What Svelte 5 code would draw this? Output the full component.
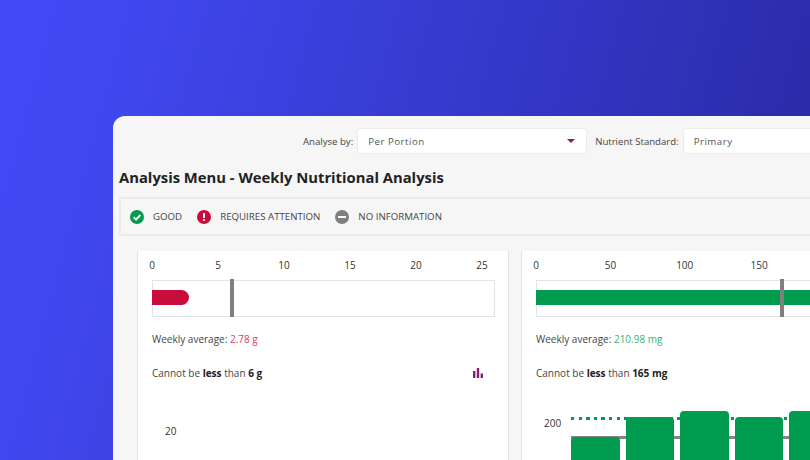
<script>
  const legend = [
    { kind: 'good', label: 'GOOD' },
    { kind: 'bad', label: 'REQUIRES ATTENTION' },
    { kind: 'none', label: 'NO INFORMATION' }
  ];

  const leftTicks = [0, 5, 10, 15, 20, 25];
  const rightTicks = [0, 50, 100, 150];
  const bars = [23, 43, 49, 43, 49];
</script>

<div class="page">
  <div class="panel">
    <div class="toolbar">
      <span class="field-label">Analyse by:</span>
      <div class="select first">
        <span>Per Portion</span>
        <span class="caret"></span>
      </div>
      <span class="field-label">Nutrient Standard:</span>
      <div class="select second">
        <span>Primary</span>
      </div>
    </div>

    <h1>Analysis Menu - Weekly Nutritional Analysis</h1>

    <div class="legend">
      {#each legend as item}
        <div class="legend-item">
          <svg width="14" height="14" viewBox="0 0 14 14">
            {#if item.kind === 'good'}
              <circle cx="7" cy="7" r="7" fill="#019b4f" />
              <path d="M3.6 7.2l2.4 2.4 4.4-4.6" fill="none" stroke="#fff" stroke-width="1.9" />
            {:else if item.kind === 'bad'}
              <circle cx="7" cy="7" r="7" fill="#c80d3c" />
              <rect x="6" y="3" width="2" height="5" rx="0.6" fill="#fff" />
              <rect x="6" y="9" width="2" height="2" rx="0.8" fill="#fff" />
            {:else}
              <circle cx="7" cy="7" r="7" fill="#7f7f7f" />
              <rect x="3" y="6" width="8" height="2" fill="#fff" />
            {/if}
          </svg>
          <span>{item.label}</span>
        </div>
      {/each}
    </div>

    <div class="cards">
      <section class="card left">
        <div class="ticks">
          {#each leftTicks as tick}
            <span>{tick}</span>
          {/each}
        </div>
        <div class="track">
          <div class="fill red"></div>
          <div class="marker marker-left"></div>
        </div>
        <p class="average">Weekly average: <span class="low">2.78 g</span></p>
        <div class="rule-row">
          <p>Cannot be <b>less</b> than <b>6 g</b></p>
          <svg width="10" height="10" viewBox="0 0 10 10">
            <rect x="0" y="3" width="2.4" height="7" fill="#8d1b6b" />
            <rect x="3.8" y="0" width="2.4" height="10" fill="#8d1b6b" />
            <rect x="7.6" y="5.5" width="2.4" height="4.5" fill="#8d1b6b" />
          </svg>
        </div>
        <div class="axis-label left-axis">20</div>
      </section>

      <section class="card right">
        <div class="ticks wide">
          {#each rightTicks as tick}
            <span>{tick}</span>
          {/each}
        </div>
        <div class="track">
          <div class="fill green"></div>
          <div class="marker marker-right"></div>
        </div>
        <p class="average">Weekly average: <span class="high">210.98 mg</span></p>
        <div class="rule-row">
          <p>Cannot be <b>less</b> than <b>165 mg</b></p>
        </div>
        <div class="bar-chart">
          <div class="axis-label">200</div>
          <div class="plot">
            <div class="dotted"></div>
            <div class="solid"></div>
            {#each bars as height}
              <div class="bar" style="height: {height}px"></div>
            {/each}
          </div>
        </div>
      </section>
    </div>
  </div>
</div>

<style>
  :global(body) {
    margin: 0;
  }

  .page {
    width: 810px;
    height: 460px;
    overflow: hidden;
    box-sizing: border-box;
    padding: 116px 0 0 113px;
    background: linear-gradient(105deg, #424af7 0%, #4047ee 15%, #2828a0 100%);
    font-family: "Open Sans", sans-serif;
    color: #333;
  }

  .panel {
    width: 900px;
    height: 344px;
    overflow: hidden;
    box-sizing: border-box;
    padding: 12px 0 0 6px;
    background: #f6f6f6;
    border-radius: 12px 0 0 0;
  }

  .toolbar {
    display: flex;
    align-items: center;
    height: 26px;
    padding-left: 184px;
  }

  .field-label {
    font-size: 9.6px;
    color: #444;
    margin-right: 4px;
  }

  .select {
    height: 26px;
    box-sizing: border-box;
    display: flex;
    align-items: center;
    justify-content: space-between;
    padding: 0 10px;
    background: #fff;
    border: 1px solid #ebebeb;
    border-radius: 3px;
    font-size: 9.7px;
    letter-spacing: 0.5px;
    color: #555;
  }

  .first {
    width: 230px;
    margin-right: 8px;
  }

  .second {
    width: 200px;
  }

  .caret {
    width: 0;
    height: 0;
    margin-right: 1px;
    border-left: 4px solid transparent;
    border-right: 4px solid transparent;
    border-top: 4px solid #8d1b5b;
  }

  h1 {
    margin: 12px 0 9px;
    font-size: 14.8px;
    line-height: 22px;
    font-weight: 700;
    color: #222;
  }

  .legend {
    display: flex;
    align-items: center;
    gap: 15px;
    height: 39px;
    box-sizing: border-box;
    padding-left: 9px;
    border: 2px solid #ebebeb;
    font-size: 9.7px;
    color: #444;
  }

  .legend-item {
    display: flex;
    align-items: center;
    gap: 9px;
  }

  .cards {
    display: grid;
    grid-template-columns: 372px 400px;
    gap: 12px;
    margin: 15px 0 0 18px;
  }

  .card {
    height: 209px;
    box-sizing: border-box;
    padding: 7px 13px 0 14px;
    background: #fff;
    border-left: 1px solid #e2e2e2;
    border-right: 1px solid #e2e2e2;
    font-size: 10px;
    color: #444;
  }

  .ticks {
    display: flex;
    height: 14px;
    line-height: 14px;
    margin: 0 0 8px -33px;
    font-size: 10px;
    color: #333;
  }

  .ticks span {
    flex: none;
    width: 66px;
    text-align: center;
  }

  .ticks.wide {
    margin-left: -37px;
  }

  .ticks.wide span {
    width: 74.3px;
  }

  .track {
    position: relative;
    box-sizing: border-box;
    width: 343px;
    height: 37px;
    padding-top: 9px;
    border: 1px solid #e4e4e4;
  }

  .right .track {
    width: 400px;
  }

  .fill {
    height: 15px;
    margin-left: -1px;
  }

  .red {
    width: 37px;
    background: #c80d3c;
    border-radius: 0 8px 8px 0;
  }

  .green {
    background: #019b4f;
  }

  .marker {
    position: absolute;
    top: -2px;
    width: 4px;
    height: 38px;
    background: #7f7f7f;
  }

  .marker-left {
    left: 77px;
  }

  .marker-right {
    left: 243px;
  }

  .average {
    margin: 14px 0 0;
    line-height: 16px;
  }

  .low {
    color: #d9406c;
  }

  .high {
    color: #3bb27a;
  }

  .rule-row {
    display: flex;
    justify-content: space-between;
    align-items: center;
    width: 331px;
    margin-top: 18px;
    height: 16px;
  }

  .rule-row p {
    margin: 0;
  }

  b {
    font-weight: 700;
    color: #222;
  }

  .axis-label {
    font-size: 10px;
    line-height: 14px;
    color: #333;
  }

  .left-axis {
    margin: 43px 0 0 13px;
  }

  .bar-chart {
    display: flex;
    align-items: flex-start;
    gap: 10px;
    margin: 30px 0 0 8px;
  }

  .bar-chart .axis-label {
    margin-top: 5px;
  }

  .plot {
    position: relative;
    display: flex;
    align-items: flex-end;
    gap: 6px;
    width: 300px;
    height: 49px;
  }

  .dotted {
    position: absolute;
    left: 0;
    right: 0;
    top: 6px;
    height: 3px;
    background: repeating-linear-gradient(90deg, #019b4f 0 3.5px, transparent 3.5px 7.6px);
  }

  .solid {
    position: absolute;
    left: 0;
    right: 0;
    top: 25px;
    height: 3px;
    background: #858585;
  }

  .bar {
    position: relative;
    width: 48.5px;
    flex: none;
    background: #019b4f;
    border-radius: 4px 4px 0 0;
  }
</style>
